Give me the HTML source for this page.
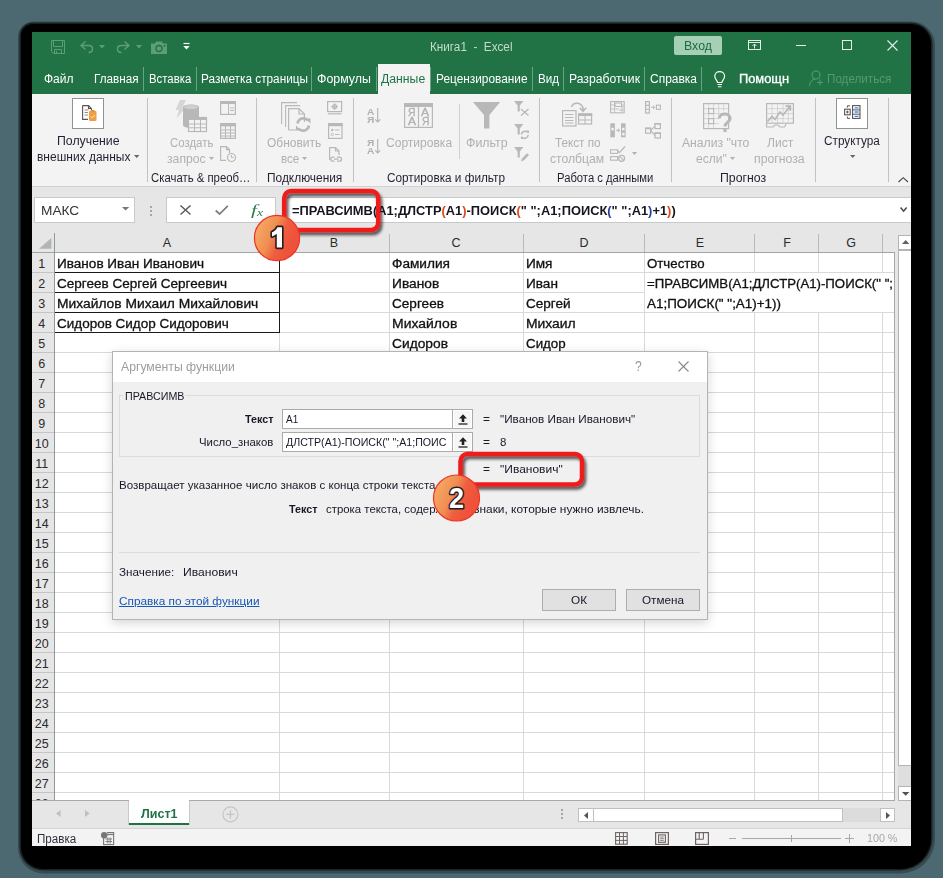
<!DOCTYPE html>
<html><head><meta charset="utf-8"><title>Excel</title>
<style>
html,body{margin:0;padding:0;}
body{width:943px;height:878px;overflow:hidden;background:#4c6971;font-family:'Liberation Sans', sans-serif;position:relative;}
body div{position:absolute;}
svg{position:absolute;overflow:visible;}
</style></head><body>
<div style="left:21px;top:24px;width:910px;height:845px;background:#000;border-radius:12px 20px 31px 22px;box-shadow:0 0 0 1.5px rgba(0,0,0,0.55),0.5px 1px 0 3.5px rgba(0,0,0,0.28);"></div>
<div style="left:0;top:0;width:911px;height:846px;overflow:hidden">
<div style="left:32px;top:32px;width:879px;height:814px;background:#fff;"></div>
<div style="left:32px;top:32px;width:879px;height:62px;background:#217346;"></div>
<div style="left:32px;top:94px;width:879px;height:92px;background:#f3f3f3;"></div>
<div style="left:32px;top:186px;width:879px;height:1px;background:#d2d2d2;"></div>
<div style="left:32px;top:187px;width:879px;height:45px;background:#e6e6e6;"></div>
<div style="left:32px;top:232px;width:879px;height:568px;background:#e6e6e6;"></div>
<div style="left:32px;top:800px;width:879px;height:28px;background:#e6e6e6;"></div>
<div style="left:32px;top:828px;width:879px;height:18px;background:#f3f3f3;"></div>
<svg style="left:51px;top:40px" width="14" height="14" viewBox="0 0 14 14"><path d="M0.5 0.5H13.5V13.5H2.5L0.5 11.5Z" fill="none" stroke="#5e9d79"/><path d="M2.5 0.5V6.5H11.5V0.5" fill="none" stroke="#5e9d79"/><path d="M3.5 13.5V9.5H10.5V13.5M5.5 13V11" fill="none" stroke="#5e9d79"/></svg>
<svg style="left:80px;top:40px" width="14" height="14" viewBox="0 0 14 14"><path d="M5.5 1.5L1 5.5L5.5 9.5M1.5 5.5H8.5C11 5.5 12.5 7 12.5 9C12.5 11 11 12.5 8.5 12.5" fill="none" stroke="#5e9d79" stroke-width="1.4"/></svg>
<svg style="left:99px;top:45px" width="6" height="4" viewBox="0 0 6 4"><path d="M0 0H6L3 3.5Z" fill="#5e9d79"/></svg>
<svg style="left:116px;top:40px" width="14" height="14" viewBox="0 0 14 14"><path d="M8.5 1.5L13 5.5L8.5 9.5M12.5 5.5H5.5C3 5.5 1.5 7 1.5 9C1.5 11 3 12.5 5.5 12.5" fill="none" stroke="#5e9d79" stroke-width="1.4"/></svg>
<svg style="left:136px;top:45px" width="6" height="4" viewBox="0 0 6 4"><path d="M0 0H6L3 3.5Z" fill="#5e9d79"/></svg>
<svg style="left:151px;top:41px" width="16" height="13" viewBox="0 0 16 13"><path d="M0 2.5H4L5 0.5H11L12 2.5H16V13H0Z" fill="#5e9d79"/><circle cx="8" cy="7.5" r="3" fill="none" stroke="#217346" stroke-width="1.3"/><rect x="12.5" y="4" width="2" height="1.5" fill="#217346"/></svg>
<svg style="left:183px;top:43px" width="8" height="8" viewBox="0 0 8 8"><path d="M0.5 0.5H6.5" stroke="#fff" stroke-width="1.2"/><path d="M0.3 3H6.7L3.5 6.5Z" fill="#fff"/></svg>
<div style="left:429.50px;top:38.00px;line-height:18px;font-size:12.5px;color:#c4dccc;font-weight:400;white-space:pre;transform:scaleX(0.9377);transform-origin:0 0;">Книга1  -  Excel</div>
<div style="left:674px;top:36px;width:48px;height:19px;background:#a5d0b6;border-radius:2px;"></div>
<div style="left:683.50px;top:38.00px;line-height:17px;font-size:12px;color:#1e6b40;font-weight:400;white-space:pre;transform:scaleX(1.0311);transform-origin:0 0;">Вход</div>
<svg style="left:748px;top:40px" width="14" height="11" viewBox="0 0 14 11"><rect x="0.5" y="0.5" width="12" height="9" fill="none" stroke="#e4efe8"/><path d="M0.5 2.5H12.5" stroke="#e4efe8"/><path d="M6.5 8.5V4M4.5 6L6.5 4L8.5 6" fill="none" stroke="#e4efe8"/></svg>
<svg style="left:796px;top:45px" width="10" height="2" viewBox="0 0 10 2"><path d="M0 0.5H10" stroke="#e4efe8" stroke-width="1"/></svg>
<svg style="left:842px;top:40px" width="10" height="10" viewBox="0 0 10 10"><rect x="0.5" y="0.5" width="9" height="9" fill="none" stroke="#e4efe8"/></svg>
<svg style="left:887px;top:40px" width="11" height="11" viewBox="0 0 11 11"><path d="M0.5 0.5L10.5 10.5M10.5 0.5L0.5 10.5" stroke="#e4efe8" stroke-width="1.1"/></svg>
<div style="left:378px;top:64px;width:52px;height:30px;background:#f3f3f3;"></div>
<div style="left:43.50px;top:71.00px;line-height:17px;font-size:12px;color:#fff;font-weight:400;white-space:pre;transform:scaleX(0.9995);transform-origin:0 0;">Файл</div>
<div style="left:93.50px;top:71.00px;line-height:17px;font-size:12px;color:#fff;font-weight:400;white-space:pre;transform:scaleX(0.9740);transform-origin:0 0;">Главная</div>
<div style="left:149.00px;top:71.00px;line-height:17px;font-size:12px;color:#fff;font-weight:400;white-space:pre;transform:scaleX(0.9460);transform-origin:0 0;">Вставка</div>
<div style="left:200.50px;top:71.00px;line-height:17px;font-size:12px;color:#fff;font-weight:400;white-space:pre;transform:scaleX(0.9828);transform-origin:0 0;">Разметка страницы</div>
<div style="left:316.90px;top:71.00px;line-height:17px;font-size:12px;color:#fff;font-weight:400;white-space:pre;transform:scaleX(1.0322);transform-origin:0 0;">Формулы</div>
<div style="left:436.00px;top:71.00px;line-height:17px;font-size:12px;color:#fff;font-weight:400;white-space:pre;transform:scaleX(0.9874);transform-origin:0 0;">Рецензирование</div>
<div style="left:537.50px;top:71.00px;line-height:17px;font-size:12px;color:#fff;font-weight:400;white-space:pre;transform:scaleX(0.9669);transform-origin:0 0;">Вид</div>
<div style="left:568.50px;top:71.00px;line-height:17px;font-size:12px;color:#fff;font-weight:400;white-space:pre;transform:scaleX(1.0145);transform-origin:0 0;">Разработчик</div>
<div style="left:649.50px;top:71.00px;line-height:17px;font-size:12px;color:#fff;font-weight:400;white-space:pre;transform:scaleX(0.9983);transform-origin:0 0;">Справка</div>
<div style="left:381.30px;top:71.00px;line-height:17px;font-size:12px;color:#217346;font-weight:400;white-space:pre;transform:scaleX(1.0194);transform-origin:0 0;">Данные</div>
<div style="left:143px;top:67px;width:1px;height:24px;background:#6da185;"></div>
<div style="left:196px;top:67px;width:1px;height:24px;background:#6da185;"></div>
<div style="left:311px;top:67px;width:1px;height:24px;background:#6da185;"></div>
<div style="left:376px;top:67px;width:1px;height:24px;background:#6da185;"></div>
<div style="left:430px;top:67px;width:1px;height:24px;background:#6da185;"></div>
<div style="left:532px;top:67px;width:1px;height:24px;background:#6da185;"></div>
<div style="left:563px;top:67px;width:1px;height:24px;background:#6da185;"></div>
<div style="left:644px;top:67px;width:1px;height:24px;background:#6da185;"></div>
<div style="left:701px;top:67px;width:1px;height:24px;background:#6da185;"></div>
<svg style="left:714px;top:71px" width="12" height="17" viewBox="0 0 12 17"><path d="M3.5 11.5C3.5 9.5 0.8 8.5 0.8 5.3C0.8 2.6 3 0.7 5.7 0.7C8.4 0.7 10.6 2.6 10.6 5.3C10.6 8.5 7.9 9.5 7.9 11.5Z" fill="none" stroke="#fff" stroke-width="1.2"/><path d="M3.5 13.5H8M4 15.7H7.5" stroke="#fff" stroke-width="1.1"/></svg>
<div style="left:739.00px;top:71.00px;line-height:17px;font-size:12px;color:#fff;font-weight:400;white-space:pre;transform:scaleX(1.0699);transform-origin:0 0;-webkit-text-stroke:0.3px #fff;">Помощн</div>
<svg style="left:809px;top:70px" width="15" height="17" viewBox="0 0 15 17"><circle cx="7" cy="5" r="4" fill="none" stroke="#579972" stroke-width="1.1"/><path d="M0.6 16C0.6 11.5 3.5 9.5 6 9.3" fill="none" stroke="#579972" stroke-width="1.1"/><path d="M8 12.5H14M11 9.5V15.5" stroke="#579972" stroke-width="1.1"/></svg>
<div style="left:827.10px;top:71.00px;line-height:17px;font-size:12px;color:#579972;font-weight:400;white-space:pre;transform:scaleX(0.9718);transform-origin:0 0;">Поделиться</div>
<div style="left:147px;top:98px;width:1px;height:84px;background:#c2c2c2;"></div>
<div style="left:256px;top:98px;width:1px;height:84px;background:#c2c2c2;"></div>
<div style="left:353px;top:98px;width:1px;height:84px;background:#c2c2c2;"></div>
<div style="left:539px;top:98px;width:1px;height:84px;background:#c2c2c2;"></div>
<div style="left:671px;top:98px;width:1px;height:84px;background:#c2c2c2;"></div>
<div style="left:815px;top:98px;width:1px;height:84px;background:#c2c2c2;"></div>
<div style="left:888px;top:98px;width:1px;height:84px;background:#c2c2c2;"></div>
<div style="left:459px;top:104px;width:1px;height:55px;background:#d0d0d0;"></div>
<div style="left:72px;top:98px;width:32px;height:31px;background:#fff;border:1px solid #8e948f;box-sizing:border-box;"></div>
<svg style="left:82px;top:105px" width="15" height="17" viewBox="0 0 15 17"><path d="M0.6 0.6H6.5L9.4 3.5V7M9.4 3.5H6.5V0.6M0.6 0.6V14.4H6" fill="none" stroke="#5d5250" stroke-width="1.1"/><path d="M2.5 5H6.5M2.5 7.5H6M2.5 10H6" stroke="#8a8080" stroke-width="0.9"/><rect x="7" y="6" width="7.5" height="10" rx="1" fill="#f0a044"/><rect x="9" y="5" width="3.5" height="2.2" fill="#e8902c"/><path d="M9 11.5L10.3 13L12.7 10" stroke="#fbe0b8" stroke-width="1" fill="none"/></svg>
<div style="left:57.00px;top:133.00px;line-height:17px;font-size:12px;color:#261f33;font-weight:400;white-space:pre;transform:scaleX(1.0251);transform-origin:0 0;">Получение</div>
<div style="left:37.10px;top:149.00px;line-height:17px;font-size:12px;color:#261f33;font-weight:400;white-space:pre;transform:scaleX(0.9986);transform-origin:0 0;">внешних данных</div>
<svg style="left:133.5px;top:155px" width="6" height="4" viewBox="0 0 6 4"><path d="M0 0H5.4L2.7 3Z" fill="#666"/></svg>
<svg style="left:175px;top:100px" width="33" height="33" viewBox="0 0 33 33"><path d="M5 0H11L7 8H10L1.5 18.5L4 10H0.5Z" fill="#d6d6d6"/><path d="M8 7C8 5.5 11.5 4.5 16 4.5C20.5 4.5 24 5.5 24 7V25C24 26.8 20.5 28 16 28C11.5 28 8 26.8 8 25Z" fill="#b8b8b8"/><ellipse cx="16" cy="7" rx="7" ry="2" fill="#cfcfcf"/><rect x="13.5" y="17.5" width="18" height="14" fill="#f3f3f3" stroke="#b8b8b8" stroke-width="1.2"/><rect x="13" y="17" width="19" height="3" fill="#b8b8b8"/><path d="M19.5 20V31M25.5 20V31M13.5 24H31.5M13.5 27.8H31.5" stroke="#b8b8b8" stroke-width="1"/></svg>
<div style="left:169.90px;top:135.00px;line-height:17px;font-size:12px;color:#b0b0b0;font-weight:400;white-space:pre;transform:scaleX(0.9516);transform-origin:0 0;">Создать</div>
<div style="left:167.40px;top:151.00px;line-height:17px;font-size:12px;color:#b0b0b0;font-weight:400;white-space:pre;transform:scaleX(1.0176);transform-origin:0 0;">запрос</div>
<svg style="left:209.2px;top:157.2px" width="6" height="4" viewBox="0 0 6 4"><path d="M0 0H5L2.5 3Z" fill="#b0b0b0"/></svg>
<svg style="left:220px;top:101px" width="16" height="14" viewBox="0 0 16 14"><rect x="0.6" y="0.6" width="14.8" height="12.8" fill="none" stroke="#b8b8b8" stroke-width="1.2"/><rect x="0" y="0" width="16" height="3" fill="#b8b8b8"/><path d="M8.5 3V13M10 7H14M10 9.5H14" stroke="#b8b8b8" stroke-width="1"/></svg>
<svg style="left:220px;top:123px" width="16" height="16" viewBox="0 0 16 16"><rect x="0.6" y="0.6" width="14.8" height="14.8" fill="none" stroke="#b8b8b8" stroke-width="1.2"/><rect x="0" y="0" width="16" height="3.4" fill="#b8b8b8"/><path d="M5.5 3V15M10.5 3V15M1 7H15M1 10H15M1 13H15" stroke="#b8b8b8" stroke-width="1"/></svg>
<svg style="left:220px;top:146px" width="16" height="16" viewBox="0 0 16 16"><path d="M6 14.4H0.6V0.6H6.5L9.5 3.6V7M6.5 0.6V3.6H9.5" fill="none" stroke="#b8b8b8" stroke-width="1.2"/><circle cx="11.5" cy="11.5" r="4" fill="none" stroke="#b8b8b8" stroke-width="1.2"/><path d="M11.5 9V11.5H13.5" fill="none" stroke="#b8b8b8" stroke-width="1"/></svg>
<div style="left:151.10px;top:170.00px;line-height:17px;font-size:12px;color:#261f33;font-weight:400;white-space:pre;transform:scaleX(0.9460);transform-origin:0 0;">Скачать &amp; преоб…</div>
<svg style="left:281px;top:102px" width="30" height="30" viewBox="0 0 30 30"><path d="M0.6 22V0.6H16M4.6 25V3.6H19" fill="none" stroke="#b8b8b8" stroke-width="1.1"/><path d="M7.6 28V6.6H18L23.4 12V20" fill="none" stroke="#b8b8b8" stroke-width="1.2"/><path d="M18 6.6V12H23.4M7.6 28H15" fill="none" stroke="#b8b8b8" stroke-width="1.2"/><path d="M16.5 21.5A6 6 0 0 1 27 18.5M28 23.5A6 6 0 0 1 17.5 26.5" fill="none" stroke="#b8b8b8" stroke-width="2.6"/><path d="M24.5 16.5H29.5V21.5ZM20 28.5H15V23.5Z" fill="#b8b8b8"/></svg>
<div style="left:267.10px;top:135.00px;line-height:17px;font-size:12px;color:#b0b0b0;font-weight:400;white-space:pre;transform:scaleX(0.9974);transform-origin:0 0;">Обновить</div>
<div style="left:281.10px;top:151.00px;line-height:17px;font-size:12px;color:#b0b0b0;font-weight:400;white-space:pre;transform:scaleX(0.9618);transform-origin:0 0;">все</div>
<svg style="left:302px;top:157.2px" width="6" height="4" viewBox="0 0 6 4"><path d="M0 0H5L2.5 3Z" fill="#b0b0b0"/></svg>
<svg style="left:327px;top:101px" width="16" height="14" viewBox="0 0 16 14"><rect x="0.6" y="0.6" width="14" height="10" fill="none" stroke="#b8b8b8" stroke-width="1.2"/><path d="M1 12.8H14.5" stroke="#b8b8b8" stroke-width="1.2"/><circle cx="7.6" cy="5.6" r="2" fill="none" stroke="#b8b8b8" stroke-width="1.2"/><path d="M7.6 2.2V9M4.2 5.6H11" stroke="#b8b8b8" stroke-width="0.9"/></svg>
<svg style="left:328px;top:123px" width="15" height="16" viewBox="0 0 15 16"><rect x="0.6" y="0.6" width="13.4" height="14.8" fill="none" stroke="#b8b8b8" stroke-width="1.2"/><rect x="0" y="0" width="14.6" height="3.2" fill="#b8b8b8"/><circle cx="4.3" cy="7" r="1.2" fill="#b8b8b8"/><circle cx="4.3" cy="11.5" r="1.2" fill="none" stroke="#b8b8b8" stroke-width="0.8"/><path d="M7 7H11.5M7 11.5H11.5" stroke="#b8b8b8" stroke-width="1"/></svg>
<svg style="left:329px;top:147px" width="14" height="16" viewBox="0 0 14 16"><path d="M0.6 13V0.6H6.5L10 4V8M6.5 0.6V4H10" fill="none" stroke="#b8b8b8" stroke-width="1.2"/><path d="M5.5 10.2H3.8A2 2 0 0 0 3.8 14.2H5.5M8 10.2H10.5A2 2 0 0 1 10.5 14.2H8M5 12.2H9.5" fill="none" stroke="#b8b8b8" stroke-width="1.3"/></svg>
<div style="left:266.80px;top:170.00px;line-height:17px;font-size:12px;color:#261f33;font-weight:400;white-space:pre;transform:scaleX(0.9918);transform-origin:0 0;">Подключения</div>
<div style="left:366.50px;top:106.00px;line-height:13px;font-size:9px;color:#b0b0b0;font-weight:700;white-space:pre;transform:scaleX(1.1231);transform-origin:0 0;">А</div>
<div style="left:366.50px;top:114.00px;line-height:13px;font-size:9px;color:#b0b0b0;font-weight:700;white-space:pre;transform:scaleX(1.1285);transform-origin:0 0;">Я</div>
<svg style="left:375px;top:108.2px" width="6" height="15" viewBox="0 0 6 15"><path d="M2.7 0V14M0.2 11.3L2.7 14L5.2 11.3" fill="none" stroke="#b0b0b0" stroke-width="1.1"/></svg>
<div style="left:366.50px;top:137.00px;line-height:13px;font-size:9px;color:#b0b0b0;font-weight:700;white-space:pre;transform:scaleX(1.1285);transform-origin:0 0;">Я</div>
<div style="left:366.50px;top:145.00px;line-height:13px;font-size:9px;color:#b0b0b0;font-weight:700;white-space:pre;transform:scaleX(1.1231);transform-origin:0 0;">А</div>
<svg style="left:375px;top:139.2px" width="6" height="15" viewBox="0 0 6 15"><path d="M2.7 0V14M0.2 11.3L2.7 14L5.2 11.3" fill="none" stroke="#b0b0b0" stroke-width="1.1"/></svg>
<svg style="left:404px;top:103px" width="29" height="25" viewBox="0 0 29 25"><rect x="0.6" y="0.6" width="27.8" height="23.8" fill="none" stroke="#b8b8b8" stroke-width="1.2"/><rect x="0" y="0" width="29" height="4" fill="#b8b8b8"/><path d="M14.5 4V24" stroke="#b8b8b8" stroke-width="1.2"/></svg>
<div style="left:408.00px;top:106.00px;line-height:14px;font-size:10px;color:#b0b0b0;font-weight:400;white-space:pre;transform:scaleX(1.0367);transform-origin:0 0;-webkit-text-stroke:0.3px #b0b0b0;">Я</div>
<div style="left:407.80px;top:115.00px;line-height:14px;font-size:10px;color:#b0b0b0;font-weight:400;white-space:pre;transform:scaleX(1.1991);transform-origin:0 0;-webkit-text-stroke:0.3px #b0b0b0;">А</div>
<div style="left:421.20px;top:106.00px;line-height:14px;font-size:10px;color:#b0b0b0;font-weight:400;white-space:pre;transform:scaleX(1.1991);transform-origin:0 0;-webkit-text-stroke:0.3px #b0b0b0;">А</div>
<div style="left:421.50px;top:115.00px;line-height:14px;font-size:10px;color:#b0b0b0;font-weight:400;white-space:pre;transform:scaleX(1.0367);transform-origin:0 0;-webkit-text-stroke:0.3px #b0b0b0;">Я</div>
<div style="left:386.10px;top:135.00px;line-height:17px;font-size:12px;color:#b0b0b0;font-weight:400;white-space:pre;transform:scaleX(1.0037);transform-origin:0 0;">Сортировка</div>
<svg style="left:473px;top:102px" width="28" height="27" viewBox="0 0 28 27"><path d="M0 0H27.2L16.4 13V26.6H11V13Z" fill="#b8b8b8"/></svg>
<div style="left:466.00px;top:135.00px;line-height:17px;font-size:12px;color:#b0b0b0;font-weight:400;white-space:pre;transform:scaleX(1.0295);transform-origin:0 0;">Фильтр</div>
<svg style="left:514px;top:101px" width="16" height="15" viewBox="0 0 16 15"><path d="M0 0H9.4L5.8 4.6V10.4H3.6V4.6Z" fill="#b8b8b8"/><path d="M7 8L14.5 14.5M14.5 8L7 14.5" stroke="#b8b8b8" stroke-width="1.3"/></svg>
<svg style="left:514px;top:124px" width="16" height="15" viewBox="0 0 16 15"><path d="M0 0H9.4L5.8 4.6V10.4H3.6V4.6Z" fill="#b8b8b8"/><path d="M7.3 10.5A3.6 3.6 0 0 1 13.6 8.5M14.2 11A3.6 3.6 0 0 1 8 13.2" fill="none" stroke="#b8b8b8" stroke-width="1.5"/><path d="M12 6.5H15V9.5ZM10 15H7V12Z" fill="#b8b8b8"/></svg>
<svg style="left:514px;top:147px" width="16" height="15" viewBox="0 0 16 15"><path d="M0 0H9.4L5.8 4.6V10.4H3.6V4.6Z" fill="#b8b8b8"/><path d="M7 14.5L8 11.5L13 6.2L15 8L10 13.3Z" fill="#b8b8b8"/></svg>
<div style="left:386.90px;top:170.00px;line-height:17px;font-size:12px;color:#261f33;font-weight:400;white-space:pre;transform:scaleX(0.9809);transform-origin:0 0;">Сортировка и фильтр</div>
<svg style="left:562px;top:101px" width="31" height="26" viewBox="0 0 31 26"><rect x="0.6" y="9.6" width="13.4" height="15.4" fill="none" stroke="#b8b8b8" stroke-width="1.2"/><path d="M3 13.5H11.5M3 16.5H11.5M3 19.5H11.5M3 22H11.5" stroke="#b8b8b8" stroke-width="1"/><rect x="16.6" y="13" width="13" height="10" fill="none" stroke="#b8b8b8" stroke-width="1.2"/><rect x="16" y="12.4" width="14.2" height="2.6" fill="#b8b8b8"/><path d="M23 15V23M17 19H29.5" stroke="#b8b8b8" stroke-width="1"/><path d="M9.5 6C11 1 18.5 0.5 21 6.5V9.5M17.8 6.8L21 10.3L24.2 6.8" fill="none" stroke="#b8b8b8" stroke-width="1.5"/></svg>
<div style="left:554.80px;top:135.00px;line-height:17px;font-size:12px;color:#b0b0b0;font-weight:400;white-space:pre;transform:scaleX(0.9761);transform-origin:0 0;">Текст по</div>
<div style="left:550.30px;top:151.00px;line-height:17px;font-size:12px;color:#b0b0b0;font-weight:400;white-space:pre;transform:scaleX(1.0140);transform-origin:0 0;">столбцам</div>
<svg style="left:610px;top:101px" width="16" height="14" viewBox="0 0 16 14"><rect x="0.6" y="0.6" width="13.6" height="11.2" fill="none" stroke="#b8b8b8" stroke-width="1.1"/><path d="M0.6 4H14M0.6 8H9M4.5 0.6V11.5" stroke="#b8b8b8" stroke-width="0.8"/><rect x="5" y="2" width="6.5" height="3.5" fill="#f3f3f3" stroke="#b8b8b8" stroke-width="1"/><path d="M12.5 5L9 10H11.5L9.5 14L15 8H12.2L14.5 5Z" fill="#cfcfcf"/></svg>
<svg style="left:610px;top:123px" width="16" height="15" viewBox="0 0 16 15"><rect x="0.3" y="0.3" width="4.6" height="14" fill="#b8b8b8"/><rect x="11" y="0.3" width="4.6" height="14" fill="#b8b8b8"/><rect x="1.4" y="4.8" width="2.4" height="2.6" fill="#f3f3f3"/><rect x="12.1" y="4.8" width="2.4" height="2.6" fill="#f3f3f3"/><rect x="12.1" y="9.8" width="2.4" height="2.6" fill="#f3f3f3"/><path d="M6 7.3H9.6M8 5.6L9.8 7.3L8 9" fill="none" stroke="#b8b8b8" stroke-width="1"/></svg>
<svg style="left:610px;top:146px" width="16" height="16" viewBox="0 0 16 16"><rect x="0.6" y="3.8" width="7" height="3.6" fill="none" stroke="#b8b8b8" stroke-width="1.1"/><rect x="0.6" y="10.6" width="7" height="3.6" fill="none" stroke="#b8b8b8" stroke-width="1.1"/><path d="M7.5 4.5L9.5 6.6L15 0.5" fill="none" stroke="#b8b8b8" stroke-width="1.3"/><circle cx="11.6" cy="12.3" r="3" fill="none" stroke="#b8b8b8" stroke-width="1.2"/><path d="M9.6 10.3L13.6 14.3" stroke="#b8b8b8" stroke-width="1.1"/></svg>
<svg style="left:632px;top:151.8px" width="6" height="4" viewBox="0 0 6 4"><path d="M0 0H5L2.5 3Z" fill="#b0b0b0"/></svg>
<svg style="left:645px;top:101px" width="16" height="13" viewBox="0 0 16 13"><rect x="0.6" y="0.6" width="3.8" height="11.4" fill="none" stroke="#b8b8b8" stroke-width="1.2"/><path d="M0.6 4.4H4.4M0.6 8.2H4.4" stroke="#b8b8b8" stroke-width="1.1"/><path d="M6 6.3H9.4M8 4.6L9.8 6.3L8 8" fill="none" stroke="#b8b8b8" stroke-width="1"/><rect x="11.4" y="4.2" width="4" height="4.2" fill="none" stroke="#b8b8b8" stroke-width="1.1"/></svg>
<svg style="left:645px;top:123px" width="16" height="16" viewBox="0 0 16 16"><rect x="0.6" y="5.2" width="5" height="5" fill="none" stroke="#b8b8b8" stroke-width="1.2"/><rect x="10" y="0.6" width="5.4" height="5" fill="none" stroke="#b8b8b8" stroke-width="1.2"/><rect x="10" y="10" width="5.4" height="5" fill="none" stroke="#b8b8b8" stroke-width="1.2"/><path d="M5.6 7.7L10 3.2M5.6 7.7L10 12.4" stroke="#b8b8b8" stroke-width="1.1"/><rect x="0" y="4.6" width="6.2" height="1.6" fill="#b8b8b8"/><rect x="9.4" y="0" width="6.6" height="1.6" fill="#b8b8b8"/><rect x="9.4" y="9.4" width="6.6" height="1.6" fill="#b8b8b8"/></svg>
<div style="left:557.30px;top:170.00px;line-height:17px;font-size:12px;color:#261f33;font-weight:400;white-space:pre;transform:scaleX(0.9379);transform-origin:0 0;">Работа с данными</div>
<svg style="left:703px;top:103px" width="30" height="30" viewBox="0 0 30 30"><rect x="0.6" y="0.6" width="25" height="25" fill="none" stroke="#b8b8b8" stroke-width="1.2"/><path d="M0.6 5.6H25.6M0.6 10.6H25.6M0.6 15.6H16M0.6 20.6H16M5.6 0.6V25.6M10.6 0.6V25.6M15.6 0.6V12M20.6 0.6V8" stroke="#cdcdcd" stroke-width="0.8"/><rect x="5.6" y="5.6" width="5" height="5" fill="none" stroke="#b8b8b8" stroke-width="1.1"/><rect x="5.6" y="15.6" width="5" height="5" fill="none" stroke="#b8b8b8" stroke-width="1.1"/><path d="M16.2 15.5C16.2 9.5 27.2 9.5 27.2 15.5C27.2 19 22 19 22 23.5" fill="none" stroke="#b8b8b8" stroke-width="3"/><rect x="20.4" y="25.8" width="3.2" height="3.2" fill="#b8b8b8"/></svg>
<div style="left:681.60px;top:135.00px;line-height:17px;font-size:12px;color:#b0b0b0;font-weight:400;white-space:pre;transform:scaleX(1.0150);transform-origin:0 0;">Анализ &quot;что</div>
<div style="left:696.00px;top:151.00px;line-height:17px;font-size:12px;color:#b0b0b0;font-weight:400;white-space:pre;transform:scaleX(1.0019);transform-origin:0 0;">если&quot;</div>
<svg style="left:729.6px;top:157.2px" width="6" height="4" viewBox="0 0 6 4"><path d="M0 0H5L2.5 3Z" fill="#b0b0b0"/></svg>
<svg style="left:766px;top:103px" width="28" height="25" viewBox="0 0 28 25"><rect x="0.6" y="0.6" width="26.8" height="19.6" fill="none" stroke="#b8b8b8" stroke-width="1.2"/><path d="M0.6 5.6H27M0.6 10.6H27M0.6 15.6H27M6 0.6V20M11.5 0.6V20M17 0.6V20M22.3 0.6V20" stroke="#cdcdcd" stroke-width="0.8"/><path d="M0.6 20.2V24H7L9 22H12L14 24H18.5L20.5 20.2" fill="none" stroke="#b8b8b8" stroke-width="1.1"/><path d="M1.5 18.5L6 13.5L9 16.5L14 9L17 12L24 3.5M19.5 3.2H24.3V8" fill="none" stroke="#b8b8b8" stroke-width="1.7"/></svg>
<div style="left:766.80px;top:135.00px;line-height:17px;font-size:12px;color:#b0b0b0;font-weight:400;white-space:pre;transform:scaleX(1.0123);transform-origin:0 0;">Лист</div>
<div style="left:754.40px;top:151.00px;line-height:17px;font-size:12px;color:#b0b0b0;font-weight:400;white-space:pre;transform:scaleX(1.0226);transform-origin:0 0;">прогноза</div>
<div style="left:720.20px;top:170.00px;line-height:17px;font-size:12px;color:#261f33;font-weight:400;white-space:pre;transform:scaleX(1.0260);transform-origin:0 0;">Прогноз</div>
<div style="left:836px;top:98px;width:32px;height:31px;background:#fff;border:1px solid #8e948f;box-sizing:border-box;"></div>
<svg style="left:844px;top:105px" width="17" height="15" viewBox="0 0 17 15"><rect x="0.6" y="4.2" width="5.6" height="5.6" fill="none" stroke="#5d5250" stroke-width="1.1"/><path d="M2 7H4.8M3.4 5.6V8.4" stroke="#5d5250" stroke-width="1"/><path d="M6 0.8H3.4V2.6M6 13.4H3.4V11.6" fill="none" stroke="#5d5250" stroke-width="1"/><rect x="8.6" y="0.6" width="7.4" height="12.8" fill="none" stroke="#5d5250" stroke-width="1.1"/><path d="M8.6 4.9H16M8.6 9.2H16" stroke="#5d5250" stroke-width="1"/><path d="M10.6 2.8H14.6M10.6 7H14.6M10.6 11.3H14.6" stroke="#2f96e8" stroke-width="1.3"/></svg>
<div style="left:824.10px;top:133.00px;line-height:17px;font-size:12px;color:#261f33;font-weight:400;white-space:pre;transform:scaleX(0.9800);transform-origin:0 0;">Структура</div>
<svg style="left:849.8px;top:154.9px" width="6" height="4" viewBox="0 0 6 4"><path d="M0 0H5.4L2.7 3Z" fill="#666"/></svg>
<svg style="left:897.5px;top:177px" width="11" height="6" viewBox="0 0 11 6"><path d="M0.5 5L5.2 0.7L10 5" fill="none" stroke="#444" stroke-width="1.1"/></svg>
<div style="left:34px;top:197px;width:101px;height:26px;background:#fff;border:1px solid #c9c9c9;box-sizing:border-box;"></div>
<div style="left:40.50px;top:202.00px;line-height:18px;font-size:13px;color:#333;font-weight:400;white-space:pre;transform:scaleX(1.0515);transform-origin:0 0;">МАКС</div>
<svg style="left:121.5px;top:206.8px" width="8" height="4" viewBox="0 0 8 4"><path d="M0 0H7.2L3.6 3.6Z" fill="#777"/></svg>
<div style="left:150px;top:206px;width:2px;height:2px;background:#a6a6a6;"></div>
<div style="left:150px;top:210px;width:2px;height:2px;background:#a6a6a6;"></div>
<div style="left:150px;top:214px;width:2px;height:2px;background:#a6a6a6;"></div>
<div style="left:166px;top:197px;width:110px;height:26px;background:#fff;border:1px solid #c9c9c9;box-sizing:border-box;"></div>
<svg style="left:179.7px;top:205.4px" width="11" height="10" viewBox="0 0 11 10"><path d="M0.5 0.5L10.5 9.5M10.5 0.5L0.5 9.5" stroke="#5a5a5a" stroke-width="1.5"/></svg>
<svg style="left:214.7px;top:205.4px" width="14" height="10" viewBox="0 0 14 10"><path d="M0.7 5.5L4.6 9L12.8 0.8" fill="none" stroke="#7d7d7d" stroke-width="1.7"/></svg>
<div style="left:251.10px;top:200.00px;line-height:21px;font-size:15px;color:#2f7d4f;font-weight:400;white-space:pre;transform:scaleX(1.4382);transform-origin:0 0;font-family:'Liberation Serif',serif;font-style:italic;">f</div>
<div style="left:256.50px;top:206.00px;line-height:14px;font-size:10px;color:#2f7d4f;font-weight:400;white-space:pre;transform:scaleX(1.3600);transform-origin:0 0;font-family:'Liberation Serif',serif;font-style:italic;">x</div>
<div style="left:282px;top:197px;width:629px;height:26px;background:#fff;border-top:1px solid #c9c9c9;border-bottom:1px solid #c9c9c9;border-left:1px solid #c9c9c9;box-sizing:border-box;"></div>
<div style="left:291.50px;top:201.00px;line-height:19px;font-size:13.5px;color:#15151f;font-weight:700;white-space:pre;transform:scaleX(0.9534);transform-origin:0 0;">=ПРАВСИМВ(A1;ДЛСТР<span style="color:#e0471f">(</span>A1<span style="color:#e0471f">)</span>-ПОИСК<span style="color:#e0471f">(</span>" ";A1;ПОИСК<span style="color:#2b3f9e">(</span>" ";A1<span style="color:#2b3f9e">)</span>+1<span style="color:#e0471f">)</span>)</div>
<svg style="left:899.7px;top:206.7px" width="8" height="6" viewBox="0 0 8 6"><path d="M0.6 0.6L3.6 4.2L6.6 0.6" fill="none" stroke="#444" stroke-width="1.5"/></svg>
<div style="left:55px;top:253px;width:839px;height:547px;background:#fff;"></div>
<div style="left:55px;top:272px;width:839px;height:1px;background:#d9d9d9;"></div>
<div style="left:55px;top:292px;width:839px;height:1px;background:#d9d9d9;"></div>
<div style="left:55px;top:312px;width:839px;height:1px;background:#d9d9d9;"></div>
<div style="left:55px;top:332px;width:839px;height:1px;background:#d9d9d9;"></div>
<div style="left:55px;top:352px;width:839px;height:1px;background:#d9d9d9;"></div>
<div style="left:55px;top:372px;width:839px;height:1px;background:#d9d9d9;"></div>
<div style="left:55px;top:392px;width:839px;height:1px;background:#d9d9d9;"></div>
<div style="left:55px;top:412px;width:839px;height:1px;background:#d9d9d9;"></div>
<div style="left:55px;top:432px;width:839px;height:1px;background:#d9d9d9;"></div>
<div style="left:55px;top:452px;width:839px;height:1px;background:#d9d9d9;"></div>
<div style="left:55px;top:472px;width:839px;height:1px;background:#d9d9d9;"></div>
<div style="left:55px;top:492px;width:839px;height:1px;background:#d9d9d9;"></div>
<div style="left:55px;top:512px;width:839px;height:1px;background:#d9d9d9;"></div>
<div style="left:55px;top:532px;width:839px;height:1px;background:#d9d9d9;"></div>
<div style="left:55px;top:552px;width:839px;height:1px;background:#d9d9d9;"></div>
<div style="left:55px;top:572px;width:839px;height:1px;background:#d9d9d9;"></div>
<div style="left:55px;top:592px;width:839px;height:1px;background:#d9d9d9;"></div>
<div style="left:55px;top:612px;width:839px;height:1px;background:#d9d9d9;"></div>
<div style="left:55px;top:632px;width:839px;height:1px;background:#d9d9d9;"></div>
<div style="left:55px;top:652px;width:839px;height:1px;background:#d9d9d9;"></div>
<div style="left:55px;top:672px;width:839px;height:1px;background:#d9d9d9;"></div>
<div style="left:55px;top:692px;width:839px;height:1px;background:#d9d9d9;"></div>
<div style="left:55px;top:712px;width:839px;height:1px;background:#d9d9d9;"></div>
<div style="left:55px;top:732px;width:839px;height:1px;background:#d9d9d9;"></div>
<div style="left:55px;top:752px;width:839px;height:1px;background:#d9d9d9;"></div>
<div style="left:55px;top:772px;width:839px;height:1px;background:#d9d9d9;"></div>
<div style="left:55px;top:792px;width:839px;height:1px;background:#d9d9d9;"></div>
<div style="left:279px;top:253px;width:1px;height:547px;background:#d9d9d9;"></div>
<div style="left:389px;top:253px;width:1px;height:547px;background:#d9d9d9;"></div>
<div style="left:523px;top:253px;width:1px;height:547px;background:#d9d9d9;"></div>
<div style="left:644px;top:253px;width:1px;height:547px;background:#d9d9d9;"></div>
<div style="left:754px;top:253px;width:1px;height:547px;background:#d9d9d9;"></div>
<div style="left:818px;top:253px;width:1px;height:547px;background:#d9d9d9;"></div>
<div style="left:882px;top:253px;width:1px;height:547px;background:#d9d9d9;"></div>
<div style="left:32px;top:252px;width:862px;height:1px;background:#a0a6a2;"></div>
<div style="left:54px;top:233px;width:1px;height:567px;background:#8f9995;"></div>
<div style="left:279px;top:234px;width:1px;height:18px;background:#b9b9b9;"></div>
<div style="left:389px;top:234px;width:1px;height:18px;background:#b9b9b9;"></div>
<div style="left:523px;top:234px;width:1px;height:18px;background:#b9b9b9;"></div>
<div style="left:644px;top:234px;width:1px;height:18px;background:#b9b9b9;"></div>
<div style="left:754px;top:234px;width:1px;height:18px;background:#b9b9b9;"></div>
<div style="left:818px;top:234px;width:1px;height:18px;background:#b9b9b9;"></div>
<div style="left:882px;top:234px;width:1px;height:18px;background:#b9b9b9;"></div>
<div style="left:894px;top:252px;width:1px;height:548px;background:#a4aaa6;"></div>
<div style="left:32px;top:272px;width:22px;height:1px;background:#c4c4c4;"></div>
<div style="left:32px;top:292px;width:22px;height:1px;background:#c4c4c4;"></div>
<div style="left:32px;top:312px;width:22px;height:1px;background:#c4c4c4;"></div>
<div style="left:32px;top:332px;width:22px;height:1px;background:#c4c4c4;"></div>
<div style="left:32px;top:352px;width:22px;height:1px;background:#c4c4c4;"></div>
<div style="left:32px;top:372px;width:22px;height:1px;background:#c4c4c4;"></div>
<div style="left:32px;top:392px;width:22px;height:1px;background:#c4c4c4;"></div>
<div style="left:32px;top:412px;width:22px;height:1px;background:#c4c4c4;"></div>
<div style="left:32px;top:432px;width:22px;height:1px;background:#c4c4c4;"></div>
<div style="left:32px;top:452px;width:22px;height:1px;background:#c4c4c4;"></div>
<div style="left:32px;top:472px;width:22px;height:1px;background:#c4c4c4;"></div>
<div style="left:32px;top:492px;width:22px;height:1px;background:#c4c4c4;"></div>
<div style="left:32px;top:512px;width:22px;height:1px;background:#c4c4c4;"></div>
<div style="left:32px;top:532px;width:22px;height:1px;background:#c4c4c4;"></div>
<div style="left:32px;top:552px;width:22px;height:1px;background:#c4c4c4;"></div>
<div style="left:32px;top:572px;width:22px;height:1px;background:#c4c4c4;"></div>
<div style="left:32px;top:592px;width:22px;height:1px;background:#c4c4c4;"></div>
<div style="left:32px;top:612px;width:22px;height:1px;background:#c4c4c4;"></div>
<div style="left:32px;top:632px;width:22px;height:1px;background:#c4c4c4;"></div>
<div style="left:32px;top:652px;width:22px;height:1px;background:#c4c4c4;"></div>
<div style="left:32px;top:672px;width:22px;height:1px;background:#c4c4c4;"></div>
<div style="left:32px;top:692px;width:22px;height:1px;background:#c4c4c4;"></div>
<div style="left:32px;top:712px;width:22px;height:1px;background:#c4c4c4;"></div>
<div style="left:32px;top:732px;width:22px;height:1px;background:#c4c4c4;"></div>
<div style="left:32px;top:752px;width:22px;height:1px;background:#c4c4c4;"></div>
<div style="left:32px;top:772px;width:22px;height:1px;background:#c4c4c4;"></div>
<div style="left:32px;top:792px;width:22px;height:1px;background:#c4c4c4;"></div>
<svg style="left:39px;top:238px" width="13" height="11" viewBox="0 0 13 11"><path d="M12.4 0V10.8H0Z" fill="#b4b4b4"/></svg>
<div style="left:162.83px;top:234.00px;line-height:18px;font-size:12.5px;color:#2b2b2b;font-weight:400;white-space:pre;">A</div>
<div style="left:329.83px;top:234.00px;line-height:18px;font-size:12.5px;color:#2b2b2b;font-weight:400;white-space:pre;">B</div>
<div style="left:451.48px;top:234.00px;line-height:18px;font-size:12.5px;color:#2b2b2b;font-weight:400;white-space:pre;">C</div>
<div style="left:579.48px;top:234.00px;line-height:18px;font-size:12.5px;color:#2b2b2b;font-weight:400;white-space:pre;">D</div>
<div style="left:695.83px;top:234.00px;line-height:18px;font-size:12.5px;color:#2b2b2b;font-weight:400;white-space:pre;">E</div>
<div style="left:783.18px;top:234.00px;line-height:18px;font-size:12.5px;color:#2b2b2b;font-weight:400;white-space:pre;">F</div>
<div style="left:846.13px;top:234.00px;line-height:18px;font-size:12.5px;color:#2b2b2b;font-weight:400;white-space:pre;">G</div>
<div style="left:38.32px;top:255.00px;line-height:18px;font-size:12.5px;color:#2b2b2b;font-weight:400;white-space:pre;">1</div>
<div style="left:38.32px;top:275.00px;line-height:18px;font-size:12.5px;color:#2b2b2b;font-weight:400;white-space:pre;">2</div>
<div style="left:38.32px;top:295.00px;line-height:18px;font-size:12.5px;color:#2b2b2b;font-weight:400;white-space:pre;">3</div>
<div style="left:38.32px;top:315.00px;line-height:18px;font-size:12.5px;color:#2b2b2b;font-weight:400;white-space:pre;">4</div>
<div style="left:38.32px;top:335.00px;line-height:18px;font-size:12.5px;color:#2b2b2b;font-weight:400;white-space:pre;">5</div>
<div style="left:38.32px;top:355.00px;line-height:18px;font-size:12.5px;color:#2b2b2b;font-weight:400;white-space:pre;">6</div>
<div style="left:38.32px;top:375.00px;line-height:18px;font-size:12.5px;color:#2b2b2b;font-weight:400;white-space:pre;">7</div>
<div style="left:38.32px;top:395.00px;line-height:18px;font-size:12.5px;color:#2b2b2b;font-weight:400;white-space:pre;">8</div>
<div style="left:38.32px;top:415.00px;line-height:18px;font-size:12.5px;color:#2b2b2b;font-weight:400;white-space:pre;">9</div>
<div style="left:34.85px;top:435.00px;line-height:18px;font-size:12.5px;color:#2b2b2b;font-weight:400;white-space:pre;">10</div>
<div style="left:35.31px;top:455.00px;line-height:18px;font-size:12.5px;color:#2b2b2b;font-weight:400;white-space:pre;">11</div>
<div style="left:34.85px;top:475.00px;line-height:18px;font-size:12.5px;color:#2b2b2b;font-weight:400;white-space:pre;">12</div>
<div style="left:34.85px;top:495.00px;line-height:18px;font-size:12.5px;color:#2b2b2b;font-weight:400;white-space:pre;">13</div>
<div style="left:34.85px;top:515.00px;line-height:18px;font-size:12.5px;color:#2b2b2b;font-weight:400;white-space:pre;">14</div>
<div style="left:34.85px;top:535.00px;line-height:18px;font-size:12.5px;color:#2b2b2b;font-weight:400;white-space:pre;">15</div>
<div style="left:34.85px;top:555.00px;line-height:18px;font-size:12.5px;color:#2b2b2b;font-weight:400;white-space:pre;">16</div>
<div style="left:34.85px;top:575.00px;line-height:18px;font-size:12.5px;color:#2b2b2b;font-weight:400;white-space:pre;">17</div>
<div style="left:34.85px;top:595.00px;line-height:18px;font-size:12.5px;color:#2b2b2b;font-weight:400;white-space:pre;">18</div>
<div style="left:34.85px;top:615.00px;line-height:18px;font-size:12.5px;color:#2b2b2b;font-weight:400;white-space:pre;">19</div>
<div style="left:34.85px;top:635.00px;line-height:18px;font-size:12.5px;color:#2b2b2b;font-weight:400;white-space:pre;">20</div>
<div style="left:34.85px;top:655.00px;line-height:18px;font-size:12.5px;color:#2b2b2b;font-weight:400;white-space:pre;">21</div>
<div style="left:34.85px;top:675.00px;line-height:18px;font-size:12.5px;color:#2b2b2b;font-weight:400;white-space:pre;">22</div>
<div style="left:34.85px;top:695.00px;line-height:18px;font-size:12.5px;color:#2b2b2b;font-weight:400;white-space:pre;">23</div>
<div style="left:34.85px;top:715.00px;line-height:18px;font-size:12.5px;color:#2b2b2b;font-weight:400;white-space:pre;">24</div>
<div style="left:34.85px;top:735.00px;line-height:18px;font-size:12.5px;color:#2b2b2b;font-weight:400;white-space:pre;">25</div>
<div style="left:34.85px;top:755.00px;line-height:18px;font-size:12.5px;color:#2b2b2b;font-weight:400;white-space:pre;">26</div>
<div style="left:34.85px;top:775.00px;line-height:18px;font-size:12.5px;color:#2b2b2b;font-weight:400;white-space:pre;">27</div>
<div style="left:34.85px;top:795.00px;line-height:18px;font-size:12.5px;color:#2b2b2b;font-weight:400;white-space:pre;">28</div>
<div style="left:645px;top:273px;width:249px;height:39px;background:#fff;"></div>
<div style="left:55px;top:272px;width:225px;height:1px;background:#1a1a1a;"></div>
<div style="left:55px;top:292px;width:225px;height:1px;background:#1a1a1a;"></div>
<div style="left:55px;top:312px;width:225px;height:1px;background:#1a1a1a;"></div>
<div style="left:55px;top:332px;width:225px;height:1px;background:#1a1a1a;"></div>
<div style="left:279px;top:253px;width:1px;height:80px;background:#1a1a1a;"></div>
<div style="left:56.70px;top:255.00px;line-height:18px;font-size:12.5px;color:#111;font-weight:400;white-space:pre;transform:scaleX(1.0851);transform-origin:0 0;-webkit-text-stroke:0.3px #111;">Иванов Иван Иванович</div>
<div style="left:56.70px;top:275.00px;line-height:18px;font-size:12.5px;color:#111;font-weight:400;white-space:pre;transform:scaleX(1.0826);transform-origin:0 0;-webkit-text-stroke:0.3px #111;">Сергеев Сергей Сергеевич</div>
<div style="left:56.70px;top:295.00px;line-height:18px;font-size:12.5px;color:#111;font-weight:400;white-space:pre;transform:scaleX(1.1054);transform-origin:0 0;-webkit-text-stroke:0.3px #111;">Михайлов Михаил Михайлович</div>
<div style="left:56.70px;top:315.00px;line-height:18px;font-size:12.5px;color:#111;font-weight:400;white-space:pre;transform:scaleX(1.0788);transform-origin:0 0;-webkit-text-stroke:0.3px #111;">Сидоров Сидор Сидорович</div>
<div style="left:392.00px;top:255.00px;line-height:18px;font-size:12.5px;color:#111;font-weight:400;white-space:pre;transform:scaleX(1.0927);transform-origin:0 0;-webkit-text-stroke:0.3px #111;">Фамилия</div>
<div style="left:392.00px;top:275.00px;line-height:18px;font-size:12.5px;color:#111;font-weight:400;white-space:pre;transform:scaleX(1.0993);transform-origin:0 0;-webkit-text-stroke:0.3px #111;">Иванов</div>
<div style="left:392.00px;top:295.00px;line-height:18px;font-size:12.5px;color:#111;font-weight:400;white-space:pre;transform:scaleX(1.0866);transform-origin:0 0;-webkit-text-stroke:0.3px #111;">Сергеев</div>
<div style="left:392.00px;top:315.00px;line-height:18px;font-size:12.5px;color:#111;font-weight:400;white-space:pre;transform:scaleX(1.1168);transform-origin:0 0;-webkit-text-stroke:0.3px #111;">Михайлов</div>
<div style="left:392.00px;top:335.00px;line-height:18px;font-size:12.5px;color:#111;font-weight:400;white-space:pre;transform:scaleX(1.1021);transform-origin:0 0;-webkit-text-stroke:0.3px #111;">Сидоров</div>
<div style="left:526.30px;top:255.00px;line-height:18px;font-size:12.5px;color:#111;font-weight:400;white-space:pre;transform:scaleX(1.0879);transform-origin:0 0;-webkit-text-stroke:0.3px #111;">Имя</div>
<div style="left:526.30px;top:275.00px;line-height:18px;font-size:12.5px;color:#111;font-weight:400;white-space:pre;transform:scaleX(1.0871);transform-origin:0 0;-webkit-text-stroke:0.3px #111;">Иван</div>
<div style="left:526.30px;top:295.00px;line-height:18px;font-size:12.5px;color:#111;font-weight:400;white-space:pre;transform:scaleX(1.0837);transform-origin:0 0;-webkit-text-stroke:0.3px #111;">Сергей</div>
<div style="left:526.30px;top:315.00px;line-height:18px;font-size:12.5px;color:#111;font-weight:400;white-space:pre;transform:scaleX(1.1110);transform-origin:0 0;-webkit-text-stroke:0.3px #111;">Михаил</div>
<div style="left:526.30px;top:335.00px;line-height:18px;font-size:12.5px;color:#111;font-weight:400;white-space:pre;transform:scaleX(1.0667);transform-origin:0 0;-webkit-text-stroke:0.3px #111;">Сидор</div>
<div style="left:647.20px;top:255.00px;line-height:18px;font-size:12.5px;color:#111;font-weight:400;white-space:pre;transform:scaleX(1.0599);transform-origin:0 0;-webkit-text-stroke:0.3px #111;">Отчество</div>
<div style="left:647.20px;top:275.00px;line-height:18px;font-size:12.5px;color:#111;font-weight:400;white-space:pre;transform:scaleX(1.0569);transform-origin:0 0;-webkit-text-stroke:0.3px #111;">=ПРАВСИМВ(A1;ДЛСТР(A1)-ПОИСК(&quot; &quot;;</div>
<div style="left:647.20px;top:295.00px;line-height:18px;font-size:12.5px;color:#111;font-weight:400;white-space:pre;transform:scaleX(1.0739);transform-origin:0 0;-webkit-text-stroke:0.3px #111;">A1;ПОИСК(&quot; &quot;;A1)+1))</div>
<div style="left:32px;top:800px;width:879px;height:28px;background:#e6e6e6;"></div>
<div style="left:32px;top:800px;width:863px;height:1px;background:#a9a9a9;"></div>
<div style="left:895px;top:232px;width:16px;height:568px;background:#e6e6e6;"></div>
<div style="left:898px;top:235px;width:14px;height:15px;background:#fff;border:1px solid #b4b4b4;box-sizing:border-box;"></div>
<svg style="left:901.8px;top:240px" width="8" height="4" viewBox="0 0 8 4"><path d="M0 4H7.4L3.7 0Z" fill="#6a5f5f"/></svg>
<div style="left:898px;top:250px;width:14px;height:516px;background:#fff;border:1px solid #b4b4b4;box-sizing:border-box;"></div>
<div style="left:898px;top:766px;width:13px;height:20px;background:#dedede;"></div>
<div style="left:898px;top:786px;width:14px;height:15px;background:#fff;border:1px solid #b4b4b4;box-sizing:border-box;"></div>
<svg style="left:902px;top:792.3px" width="8" height="4" viewBox="0 0 8 4"><path d="M0 0H7.4L3.7 3.8Z" fill="#5a5050"/></svg>
<div style="left:32px;top:828px;width:879px;height:1px;background:#d4d4d4;"></div>
<svg style="left:56px;top:810px" width="5" height="8" viewBox="0 0 5 8"><path d="M4.6 0V7L0 3.5Z" fill="#c0c0c0"/></svg>
<svg style="left:85px;top:810px" width="5" height="8" viewBox="0 0 5 8"><path d="M0 0V7L4.6 3.5Z" fill="#c0c0c0"/></svg>
<div style="left:129px;top:800px;width:60px;height:25px;background:#fff;"></div>
<div style="left:128px;top:801px;width:1px;height:24px;background:#c8c8c8;"></div>
<div style="left:189px;top:801px;width:1px;height:24px;background:#c8c8c8;"></div>
<div style="left:129px;top:823px;width:60px;height:2px;background:#217346;"></div>
<div style="left:140.70px;top:805.00px;line-height:18px;font-size:13px;color:#217346;font-weight:700;white-space:pre;transform:scaleX(0.9643);transform-origin:0 0;">Лист1</div>
<svg style="left:221.5px;top:805.5px" width="17" height="17" viewBox="0 0 17 17"><circle cx="8.4" cy="8.4" r="7.5" fill="none" stroke="#c4c4c4" stroke-width="1.1"/><path d="M4.4 8.4H12.4M8.4 4.4V12.4" stroke="#c4c4c4" stroke-width="1.3"/></svg>
<div style="left:561px;top:809px;width:2px;height:2px;background:#a6a6a6;"></div>
<div style="left:561px;top:813px;width:2px;height:2px;background:#a6a6a6;"></div>
<div style="left:561px;top:817px;width:2px;height:2px;background:#a6a6a6;"></div>
<div style="left:578px;top:808px;width:16px;height:14px;background:#fff;border:1px solid #c0c0c0;box-sizing:border-box;"></div>
<svg style="left:584px;top:811.5px" width="4" height="7" viewBox="0 0 4 7"><path d="M4 0V7L0 3.5Z" fill="#555"/></svg>
<div style="left:593px;top:808px;width:250px;height:14px;background:#fff;border:1px solid #c0c0c0;box-sizing:border-box;"></div>
<div style="left:843px;top:808px;width:37px;height:14px;background:#dcdcdc;"></div>
<div style="left:880px;top:808px;width:15px;height:14px;background:#fff;border:1px solid #c0c0c0;box-sizing:border-box;"></div>
<svg style="left:885.5px;top:811.5px" width="4" height="7" viewBox="0 0 4 7"><path d="M0 0V7L4 3.5Z" fill="#555"/></svg>
<div style="left:37.10px;top:831.00px;line-height:17px;font-size:12px;color:#352f3a;font-weight:400;white-space:pre;transform:scaleX(0.9668);transform-origin:0 0;">Правка</div>
<svg style="left:101px;top:832px" width="13" height="13" viewBox="0 0 13 13"><circle cx="3.2" cy="3.2" r="3.2" fill="#777"/><rect x="2.6" y="2.6" width="10" height="10" fill="none" stroke="#777" stroke-width="1.1"/><path d="M6 0.6H12.6V3" stroke="#777" fill="none" stroke-width="1.1"/><path d="M4.5 7H11M4.5 9.5H11M6.8 5.5V11.5M9.2 5.5V11.5" stroke="#777" stroke-width="0.9"/></svg>
<svg style="left:615px;top:832px" width="13" height="13" viewBox="0 0 13 13"><rect x="0.6" y="0.6" width="11.6" height="11.6" fill="none" stroke="#6e6464" stroke-width="1.1"/><path d="M4.5 0.6V12.2M8.4 0.6V12.2M0.6 4.5H12.2M0.6 8.4H12.2" stroke="#6e6464" stroke-width="1"/></svg>
<svg style="left:655px;top:832px" width="14" height="13" viewBox="0 0 14 13"><rect x="0.6" y="0.6" width="12.8" height="11.8" fill="none" stroke="#6e6464" stroke-width="1.2"/><rect x="3.6" y="2.9" width="6.8" height="7.4" fill="none" stroke="#6e6464" stroke-width="1.1"/><path d="M5.2 5H8.8M5.2 6.7H8.8M5.2 8.4H8.8" stroke="#6e6464" stroke-width="0.8"/></svg>
<svg style="left:695px;top:832px" width="14" height="13" viewBox="0 0 14 13"><rect x="0.6" y="0.6" width="12.8" height="11.8" fill="none" stroke="#6e6464" stroke-width="1.2"/><path d="M4.2 0.6V7.2M8.4 0.6V7.2M0.6 7.2H8.4" fill="none" stroke="#6e6464" stroke-width="1.1"/></svg>
<div style="left:729px;top:838px;width:7px;height:1px;background:#a8a8a8;"></div>
<div style="left:741.5px;top:838px;width:99px;height:1px;background:#a8a8a8;"></div>
<div style="left:791px;top:835px;width:1px;height:7px;background:#a8a8a8;"></div>
<div style="left:845px;top:838px;width:9px;height:1px;background:#a8a8a8;"></div>
<div style="left:849px;top:834px;width:1px;height:9px;background:#a8a8a8;"></div>
<div style="left:867.10px;top:830.00px;line-height:16px;font-size:11.5px;color:#a8a8a8;font-weight:400;white-space:pre;transform:scaleX(0.9322);transform-origin:0 0;">100 %</div>
<div style="left:112px;top:351px;width:596px;height:269px;background:#f0f0f0;border:1px solid #b4b4b4;box-sizing:border-box;box-shadow:0 3px 10px 0 rgba(0,0,0,0.17);"></div>
<div style="left:113px;top:352px;width:594px;height:30px;background:#fff;"></div>
<div style="left:121.00px;top:359.00px;line-height:17px;font-size:12px;color:#9a9ea0;font-weight:400;white-space:pre;transform:scaleX(1.0176);transform-origin:0 0;">Аргументы функции</div>
<div style="left:635.30px;top:356.00px;line-height:20px;font-size:14px;color:#9a9a9a;font-weight:400;white-space:pre;transform:scaleX(0.8721);transform-origin:0 0;">?</div>
<svg style="left:678px;top:361px" width="11" height="11" viewBox="0 0 11 11"><path d="M0.5 0.5L10.5 10.5M10.5 0.5L0.5 10.5" stroke="#8a8a8a" stroke-width="1.1"/></svg>
<div style="left:119px;top:395px;width:581px;height:62px;border:1px solid #dcdcdc;box-sizing:border-box;"></div>
<div style="left:123px;top:390px;width:62px;height:12px;background:#f0f0f0;"></div>
<div style="left:124.90px;top:389.00px;line-height:15px;font-size:10.5px;color:#1c1626;font-weight:400;white-space:pre;transform:scaleX(1.0190);transform-origin:0 0;">ПРАВСИМВ</div>
<div style="left:245.00px;top:412.00px;line-height:15px;font-size:10.5px;color:#1c1626;font-weight:700;white-space:pre;transform:scaleX(1.0236);transform-origin:0 0;">Текст</div>
<div style="left:199.20px;top:435.00px;line-height:15px;font-size:10.5px;color:#1c1626;font-weight:400;white-space:pre;transform:scaleX(1.0827);transform-origin:0 0;">Число_знаков</div>
<div style="left:282px;top:409px;width:171px;height:20px;background:#fff;border:1px solid #ababab;box-sizing:border-box;"></div>
<div style="left:282px;top:432px;width:171px;height:20px;background:#fff;border:1px solid #ababab;box-sizing:border-box;"></div>
<div style="left:285.90px;top:412.00px;line-height:15px;font-size:10.5px;color:#1c1626;font-weight:400;white-space:pre;transform:scaleX(0.9499);transform-origin:0 0;">A1</div>
<div style="left:285.90px;top:435.00px;line-height:15px;font-size:10.5px;color:#1c1626;font-weight:400;white-space:pre;transform:scaleX(1.0130);transform-origin:0 0;">ДЛСТР(A1)-ПОИСК(&quot; &quot;;A1;ПОИС</div>
<div style="left:452px;top:409px;width:21px;height:20px;background:#f6f6f6;border:1px solid #ababab;box-sizing:border-box;box-shadow:inset 0 0 0 1px #fff;"></div>
<svg style="left:457.5px;top:413.5px" width="10" height="11" viewBox="0 0 10 11"><path d="M5 0.3L9 4.6H6.3V8H3.7V4.6H1Z" fill="#222"/><path d="M0.5 10H9.5" stroke="#222" stroke-width="1.3"/></svg>
<div style="left:452px;top:432px;width:21px;height:20px;background:#f6f6f6;border:1px solid #ababab;box-sizing:border-box;box-shadow:inset 0 0 0 1px #fff;"></div>
<svg style="left:457.5px;top:436.5px" width="10" height="11" viewBox="0 0 10 11"><path d="M5 0.3L9 4.6H6.3V8H3.7V4.6H1Z" fill="#222"/><path d="M0.5 10H9.5" stroke="#222" stroke-width="1.3"/></svg>
<div style="left:483.10px;top:412.00px;line-height:15px;font-size:10.5px;color:#1c1626;font-weight:400;white-space:pre;transform:scaleX(1.1399);transform-origin:0 0;">=</div>
<div style="left:499.80px;top:412.00px;line-height:15px;font-size:10.5px;color:#1c1626;font-weight:400;white-space:pre;transform:scaleX(1.1136);transform-origin:0 0;">&quot;Иванов Иван Иванович&quot;</div>
<div style="left:483.10px;top:435.00px;line-height:15px;font-size:10.5px;color:#1c1626;font-weight:400;white-space:pre;transform:scaleX(1.1399);transform-origin:0 0;">=</div>
<div style="left:500.10px;top:435.00px;line-height:15px;font-size:10.5px;color:#1c1626;font-weight:400;white-space:pre;transform:scaleX(1.0952);transform-origin:0 0;">8</div>
<div style="left:483.10px;top:462.00px;line-height:15px;font-size:10.5px;color:#1c1626;font-weight:400;white-space:pre;transform:scaleX(1.1399);transform-origin:0 0;">=</div>
<div style="left:499.80px;top:462.00px;line-height:15px;font-size:10.5px;color:#1c1626;font-weight:400;white-space:pre;transform:scaleX(1.1429);transform-origin:0 0;">&quot;Иванович&quot;</div>
<div style="left:118.80px;top:478.00px;line-height:15px;font-size:10.5px;color:#1c1626;font-weight:400;white-space:pre;transform:scaleX(1.1002);transform-origin:0 0;">Возвращает указанное число знаков с конца строки текста.</div>
<div style="left:288.50px;top:502.00px;line-height:15px;font-size:10.5px;color:#1c1626;font-weight:700;white-space:pre;transform:scaleX(1.0236);transform-origin:0 0;">Текст</div>
<div style="left:326.20px;top:502.00px;line-height:15px;font-size:10.5px;color:#1c1626;font-weight:400;white-space:pre;transform:scaleX(1.0843);transform-origin:0 0;">строка текста, содержащая</div>
<div style="left:474.00px;top:502.00px;line-height:15px;font-size:10.5px;color:#1c1626;font-weight:400;white-space:pre;transform:scaleX(1.1335);transform-origin:0 0;">знаки, которые нужно извлечь.</div>
<div style="left:119px;top:552px;width:581px;height:1px;background:#dcdcdc;"></div>
<div style="left:118.80px;top:565.00px;line-height:15px;font-size:10.5px;color:#1c1626;font-weight:400;white-space:pre;transform:scaleX(1.1155);transform-origin:0 0;">Значение:</div>
<div style="left:182.80px;top:565.00px;line-height:15px;font-size:10.5px;color:#1c1626;font-weight:400;white-space:pre;transform:scaleX(1.1539);transform-origin:0 0;">Иванович</div>
<div style="left:118.80px;top:594.00px;line-height:15px;font-size:10.5px;color:#1957b8;font-weight:400;white-space:pre;transform:scaleX(1.1248);transform-origin:0 0;text-decoration:underline;">Справка по этой функции</div>
<div style="left:542px;top:589px;width:74px;height:22px;background:#e1e1e1;border:1px solid #adadad;box-sizing:border-box;"></div>
<div style="left:626px;top:589px;width:74px;height:22px;background:#e1e1e1;border:1px solid #adadad;box-sizing:border-box;"></div>
<div style="left:571.00px;top:593.00px;line-height:15px;font-size:10.5px;color:#1c1626;font-weight:400;white-space:pre;transform:scaleX(1.1191);transform-origin:0 0;">ОК</div>
<div style="left:642.00px;top:593.00px;line-height:15px;font-size:10.5px;color:#1c1626;font-weight:400;white-space:pre;transform:scaleX(1.1144);transform-origin:0 0;">Отмена</div>
</div>
<svg style="left:0;top:0" width="943" height="878" viewBox="0 0 943 878">
<defs>
<filter id="sh" x="-20%" y="-20%" width="150%" height="160%"><feGaussianBlur in="SourceAlpha" stdDeviation="1.6"/><feOffset dx="2" dy="2.5"/><feComponentTransfer><feFuncA type="linear" slope="0.65"/></feComponentTransfer><feMerge><feMergeNode/><feMergeNode in="SourceGraphic"/></feMerge></filter>
<linearGradient id="bg1" x1="0.05" y1="0.25" x2="0.85" y2="0.6"><stop offset="0" stop-color="#f6a864"/><stop offset="0.42" stop-color="#f08f52"/><stop offset="0.68" stop-color="#ef5e40"/><stop offset="1" stop-color="#ee523a"/></linearGradient>
</defs>
<g filter="url(#sh)">
<rect x="284.2" y="191" width="94" height="39" rx="7" fill="none" stroke="#f01a1a" stroke-width="4.5"/>
<rect x="460.5" y="454" width="121.5" height="30.5" rx="7" fill="none" stroke="#f01a1a" stroke-width="4.5"/>
</g>
<g>
<circle cx="277" cy="238" r="22.6" fill="url(#bg1)" stroke="#ee3322" stroke-width="1.2"/>
<circle cx="456.5" cy="498" r="23" fill="url(#bg1)" stroke="#ee3322" stroke-width="1.2"/>
</g>
<g font-family="'Liberation Sans',sans-serif" font-weight="700" font-size="30" fill="#fff" stroke="#231c22" stroke-width="3" stroke-linejoin="round" paint-order="stroke" text-anchor="middle">
<path transform="translate(271.6,227.2)" d="M5.8 0H10.4V20.4H5.2V6.6C3.9 7.7 2.3 8.6 0.4 9.2V5C2.8 4.1 4.8 2.3 5.8 0Z" stroke-width="3.2"/>
<text transform="translate(456.4,507.7) scale(0.9,1)" x="0" y="0">2</text>
</g>
</svg>
</body></html>
